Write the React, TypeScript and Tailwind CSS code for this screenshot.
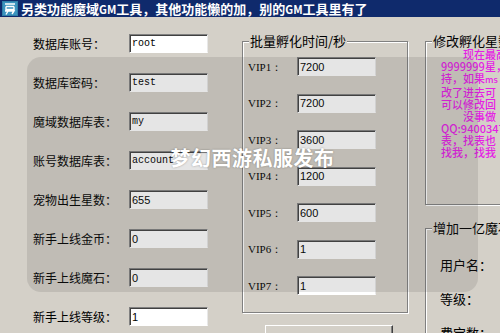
import React from "react";

const leftRows: { label: string; value: string; mono?: boolean }[] = [
  { label: "数据库账号：", value: "root", mono: true },
  { label: "数据库密码：", value: "test", mono: true },
  { label: "魔域数据库表：", value: "my", mono: true },
  { label: "账号数据库表：", value: "account", mono: true },
  { label: "宠物出生星数：", value: "655" },
  { label: "新手上线金币：", value: "0" },
  { label: "新手上线魔石：", value: "0" },
  { label: "新手上线等级：", value: "1" },
];

const vipRows = [
  { label: "VIP1：", value: "7200" },
  { label: "VIP2：", value: "7200" },
  { label: "VIP3：", value: "3600" },
  { label: "VIP4：", value: "1200" },
  { label: "VIP5：", value: "600" },
  { label: "VIP6：", value: "1" },
  { label: "VIP7：", value: "1" },
];

function Field({ value, mono }: { value: string; mono?: boolean }) {
  return (
    <div className="w-[79px] h-[19px] shrink-0 bg-white border border-t-[#808080] border-l-[#808080] border-b-white border-r-[#e8e8e8] shadow-[inset_1px_1px_0_#404040] flex items-center pl-[2px] overflow-hidden">
      <span
        className={
          mono
            ? "font-['Liberation_Mono',monospace] text-[10px] leading-[12px] text-black"
            : "font-['Liberation_Sans',Arial,sans-serif] text-[11px] leading-[12px] text-black"
        }
      >
        {value}
      </span>
    </div>
  );
}

function TitleIcon() {
  return (
    <svg width="16" height="15" viewBox="0 0 16 15" className="shrink-0">
      <rect x="0" y="0" width="16" height="15" fill="#2f7fa8" />
      <rect x="1" y="1" width="14" height="13" fill="#3b93bf" />
      <path d="M3 3h10M4 5.5h8M4 5.5v3h8v-3M3 10h9l-2 3M7 8.5l-3 5" stroke="#ffffff" strokeWidth="1.4" fill="none" />
    </svg>
  );
}

export default function App() {
  return (
    <div className="relative w-[500px] h-[333px] overflow-hidden bg-[#d4d0c8] font-['Noto_Sans_CJK_SC','Noto_Sans',sans-serif] text-black">
      {/* title bar */}
      <div className="h-[17px] bg-[#0f2a6c] flex items-center pl-[2px] gap-[3px]">
        <TitleIcon />
        <span className="text-white font-bold text-[13px] leading-[16px] whitespace-nowrap">
          另类功能魔域<span className="text-[11px]">GM</span>工具，其他功能懒的加，别的<span className="text-[11px]">GM</span>工具里有了
        </span>
      </div>

      <div className="flex">
        {/* left column */}
        <div className="w-[242px] shrink-0 pl-[33px] pt-[7px] flex flex-col">
          {leftRows.map((r) => (
            <div key={r.label} className="h-[39px] flex items-center">
              <span className="w-[96px] shrink-0 text-[12px] leading-[14px] whitespace-nowrap">{r.label}</span>
              <Field value={r.value} mono={r.mono} />
            </div>
          ))}
        </div>

        {/* middle column */}
        <div className="w-[183px] shrink-0 pt-[24px] flex flex-col">
          <div className="relative w-[166px] h-[272px] border border-[#808080] shadow-[inset_1px_1px_0_#ffffff,1px_1px_0_#ffffff] pt-[6.25px] pl-[5px] flex flex-col">
            <span className="absolute left-[6px] top-[-9px] px-[1px] bg-[#d4d0c8] text-[13px] leading-[16px] whitespace-nowrap">
              批量孵化时间/秒
            </span>
            {vipRows.map((r) => (
              <div key={r.label} className="h-[36.5px] flex items-center">
                <span className="w-[49px] shrink-0 font-['Liberation_Serif',serif] text-[11px] leading-[12px] whitespace-nowrap">
                  {r.label}
                </span>
                <Field value={r.value} />
              </div>
            ))}
          </div>
          <div className="mt-[12px] ml-[23px] w-[128px] h-[30px] bg-[#d4d0c8] border border-t-white border-l-white border-b-[#404040] border-r-[#404040] shadow-[inset_-1px_-1px_0_#808080]" />
        </div>

        {/* right column */}
        <div className="flex-1 pt-[24px] flex flex-col overflow-hidden">
          <div className="relative w-[140px] h-[164px] border border-[#808080] shadow-[inset_1px_1px_0_#ffffff,1px_1px_0_#ffffff] pt-[6px] pl-[15px]">
            <span className="absolute left-[6px] top-[-9px] px-[1px] bg-[#d4d0c8] text-[13px] leading-[16px] whitespace-nowrap">
              修改孵化星数
            </span>
            <div className="text-[#e51ee5] text-[11px] leading-[12px] whitespace-nowrap font-medium">
              <div>　　现在最高</div>
              <div>9999999星，</div>
              <div>
                持，如果<span className="text-[9px]">ms</span>
              </div>
              <div>改了进去可</div>
              <div>可以修改回</div>
              <div>　　没事做</div>
              <div>QQ:9400347</div>
              <div>表，找表也</div>
              <div>找我，找我</div>
            </div>
          </div>
          <div className="relative mt-[23px] w-[140px] h-[140px] border border-[#808080] shadow-[inset_1px_1px_0_#ffffff,1px_1px_0_#ffffff] pl-[14px] pt-[27px]">
            <span className="absolute left-[6px] top-[-9px] px-[1px] bg-[#d4d0c8] text-[13px] leading-[16px] whitespace-nowrap">
              增加一亿魔石
            </span>
            <div className="h-[18px] flex items-center text-[13px] leading-[16px]">用户名：</div>
            <div className="h-[16px]" />
            <div className="h-[18px] flex items-center text-[13px] leading-[16px]">等级：</div>
            <div className="h-[16px]" />
            <div className="h-[18px] flex items-center text-[13px] leading-[16px]">费宝数：</div>
          </div>
        </div>
      </div>

      {/* watermark overlay */}
      <div className="absolute left-[27px] top-[57px] w-[451px] h-[235px] rounded-[14px] bg-[rgba(70,70,70,0.14)]">
        <div className="absolute left-0 right-0 top-[89px] text-center text-white font-bold text-[20px] leading-[24px] tracking-[0.5px] [text-shadow:0_0_2px_rgba(0,0,0,0.35)]">
          梦幻西游私服发布
        </div>
      </div>
    </div>
  );
}
